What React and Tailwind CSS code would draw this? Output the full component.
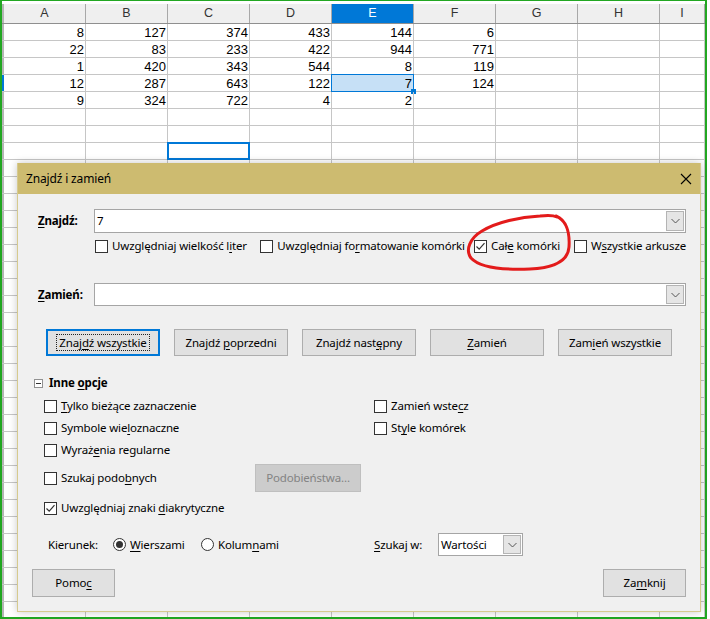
import React from 'react';

const cols = ['A', 'B', 'C', 'D', 'E', 'F', 'G', 'H', 'I'];
const data = [
  ['8', '127', '374', '433', '144', '6'],
  ['22', '83', '233', '422', '944', '771'],
  ['1', '420', '343', '544', '8', '119'],
  ['12', '287', '643', '122', '7', '124'],
  ['9', '324', '722', '4', '2', ''],
];
const rowCount = 36;

// label with one underlined (mnemonic) letter
function U({ t, i }) {
  if (i === undefined || i < 0) return <>{t}</>;
  return (
    <>
      {t.slice(0, i)}
      <span className="underline underline-offset-2">{t[i]}</span>
      {t.slice(i + 1)}
    </>
  );
}

function Check({ checked }) {
  return (
    <span className="w-[13px] h-[13px] shrink-0 bg-white border border-[#333] flex items-center justify-center">
      {checked && (
        <svg width="11" height="11" viewBox="0 0 11 11">
          <path d="M1.5 5.5 L4.2 8.2 L9.5 2.2" fill="none" stroke="#333" strokeWidth="1.2" />
        </svg>
      )}
    </span>
  );
}

function CheckItem({ t, u, checked, w }) {
  return (
    <div className={`flex items-center gap-[4px] ${w || ''}`}>
      <Check checked={checked} />
      <span className="whitespace-nowrap">
        <U t={t} i={u} />
      </span>
    </div>
  );
}

function Radio({ checked }) {
  return (
    <span className="w-[13px] h-[13px] shrink-0 rounded-full bg-white border border-[#333] flex items-center justify-center">
      {checked && <span className="w-[7px] h-[7px] rounded-full bg-[#333]" />}
    </span>
  );
}

function Chevron() {
  return (
    <svg width="9" height="6" viewBox="0 0 9 6">
      <path d="M0.5 1 L4.5 5 L8.5 1" fill="none" stroke="#555" strokeWidth="1" />
    </svg>
  );
}

function Btn({ t, u, w = 'w-[114px]', h = 'h-[27px]', focus, disabled }) {
  if (focus) {
    return (
      <div className={`${w} ${h} bg-[#e1e1e1] border-2 border-[#0078d7] flex items-center justify-center`}>
        <span className="border border-dotted border-[#222] px-[2px] leading-[15px]">
          <U t={t} i={u} />
        </span>
      </div>
    );
  }
  return (
    <div
      className={`${w} ${h} border flex items-center justify-center ${
        disabled ? 'bg-[#cccccc] border-[#bfbfbf] text-[#838383]' : 'bg-[#e1e1e1] border-[#adadad]'
      }`}
    >
      <span>
        <U t={t} i={u} />
      </span>
    </div>
  );
}

function Combo({ value, h = 'h-[24px]' }) {
  return (
    <div className={`flex-1 ${h} bg-white border border-[#a5a5a5] flex items-stretch`}>
      <div className="flex-1 pl-[2px] flex items-center">{value}</div>
      <div className="w-[18px] m-px bg-[#e5e5e5] border border-[#b4b4b4] flex items-center justify-center">
        <Chevron />
      </div>
    </div>
  );
}

function Sheet() {
  return (
    <div className="w-[707px] h-[619px] border-t border-l-2 border-r-2 border-b-2 border-[#22a722] overflow-hidden pt-[3px] font-['Liberation_Sans',sans-serif] text-[13px] text-black">
      <div className="flex h-[20px] bg-[#efefef] border-b border-[#8f8f8f]">
        <div className="w-[2px] bg-[#b5b5b5]" />
        {cols.map((c) => (
          <div
            key={c}
            className={`${c === 'I' ? 'flex-1' : 'w-[82px]'} border-r border-[#a8a8a8] flex items-center justify-center text-[12.5px] ${
              c === 'E' ? 'bg-[#0078d7] text-white' : 'text-[#333]'
            }`}
          >
            {c}
          </div>
        ))}
      </div>
      {Array.from({ length: rowCount }).map((_, r) => (
        <div key={r} className="flex h-[17px] border-b border-[#c6c6c6]">
          <div className={`w-[2px] ${r === 3 ? 'bg-[#0078d7]' : 'bg-[#b5b5b5]'}`} />
          {cols.map((c, ci) => {
            const v = data[r] ? data[r][ci] || '' : '';
            const isE4 = r === 3 && c === 'E';
            const isC8 = r === 7 && c === 'C';
            return (
              <div
                key={c}
                className={`relative ${c === 'I' ? 'flex-1' : 'w-[82px]'} border-r border-[#c6c6c6] flex items-center justify-end pr-[1px] leading-none ${
                  isE4 ? 'bg-[#c6e0f6]' : ''
                }`}
              >
                {v}
                {isE4 && (
                  <>
                    <div className="absolute -left-px -top-px w-[83px] h-[18px] border border-[#0078d7]" />
                    <div className="absolute -right-[3px] -bottom-[3px] w-[5px] h-[5px] bg-[#0078d7]" />
                  </>
                )}
                {isC8 && <div className="absolute -left-px -top-px w-[83px] h-[18px] border-2 border-[#0078d7]" />}
              </div>
            );
          })}
        </div>
      ))}
    </div>
  );
}

function Dialog() {
  return (
    <div className="absolute left-[17px] top-[163px] w-[684px] h-[449px] bg-[#f0f0f0] border-x border-b border-[#d6ca8e] shadow-[0_0_8px_rgba(0,0,0,0.22)] font-['Noto_Sans',sans-serif] text-[11.5px] tracking-[-0.15px] text-black flex flex-col">
      <div className="h-[31px] bg-[#cdbb70] flex items-center justify-between pl-[8px] pr-[8px] text-[12px]">
        <span>Znajdź i zamień</span>
        <svg width="12" height="12" viewBox="0 0 12 12">
          <path d="M1 1 L11 11 M11 1 L1 11" stroke="#000" strokeWidth="1.1" />
        </svg>
      </div>

      <div className="flex flex-col pr-[14px]">
        <div className="mt-[15px] h-[24px] flex items-center">
          <div className="w-[76px] pl-[20px] font-bold">
            <U t="Znajdź:" i={0} />
          </div>
          <Combo value="7" />
        </div>

        <div className="mt-[5px] h-[16px] flex items-center ml-[77px]">
          <CheckItem t="Uwzględniaj wielkość liter" u={22} w="w-[167px]" />
          <CheckItem t="Uwzględniaj formatowanie komórki" u={14} w="w-[216px]" />
          <CheckItem t="Całe komórki" u={3} checked w="w-[101px]" />
          <CheckItem t="Wszystkie arkusze" u={1} />
        </div>

        <div className="mt-[29px] h-[23px] flex items-center">
          <div className="w-[76px] pl-[20px] font-bold">
            <U t="Zamień:" i={0} />
          </div>
          <Combo value="" h="h-[23px]" />
        </div>

        <div className="mt-[23px] ml-[28px] flex gap-[14px]">
          <Btn t="Znajdź wszystkie" u={4} focus />
          <Btn t="Znajdź poprzedni" u={7} />
          <Btn t="Znajdź następny" u={11} />
          <Btn t="Zamień" u={0} />
          <Btn t="Zamień wszystkie" u={3} />
        </div>

        <div className="mt-[19px] h-[16px] ml-[16px] flex items-center gap-[6px]">
          <span className="w-[9px] h-[9px] border border-[#919191] bg-white flex items-center justify-center">
            <span className="w-[5px] h-px bg-[#333]" />
          </span>
          <span className="font-bold">
            <U t="Inne opcje" i={5} />
          </span>
        </div>

        <div className="mt-[4px] ml-[26px] flex flex-col">
          <div className="h-[22px] flex items-center">
            <CheckItem t="Tylko bieżące zaznaczenie" u={0} w="w-[330px]" />
            <CheckItem t="Zamień wstecz" u={11} />
          </div>
          <div className="h-[22px] flex items-center">
            <CheckItem t="Symbole wieloznaczne" u={11} w="w-[330px]" />
            <CheckItem t="Style komórek" u={2} />
          </div>
          <div className="h-[22px] flex items-center">
            <CheckItem t="Wyrażenia regularne" u={5} w="w-[330px]" />
          </div>
          <div className="mt-[3px] h-[28px] flex items-center">
            <CheckItem t="Szukaj podobnych" u={11} w="w-[211px]" />
            <Btn t="Podobieństwa..." w="w-[106px]" h="h-[28px]" disabled />
          </div>
          <div className="mt-[5px] h-[22px] flex items-center">
            <CheckItem t="Uwzględniaj znaki diakrytyczne" u={18} checked />
          </div>
        </div>

        <div className="mt-[14px] h-[23px] ml-[30px] flex items-center">
          <span className="w-[65px]">Kierunek:</span>
          <div className="w-[88px] flex items-center gap-[4px]">
            <Radio checked />
            <span>
              <U t="Wierszami" i={0} />
            </span>
          </div>
          <div className="w-[173px] flex items-center gap-[4px]">
            <Radio />
            <span>
              <U t="Kolumnami" i={5} />
            </span>
          </div>
          <span className="w-[64px]">
            <U t="Szukaj w:" i={0} />
          </span>
          <div className="w-[85px] flex">
            <Combo value="Wartości" h="h-[23px]" />
          </div>
        </div>

        <div className="mt-[13px] ml-[14px] flex justify-between">
          <Btn t="Pomoc" u={4} w="w-[83px]" h="h-[28px]" />
          <Btn t="Zamknij" u={2} w="w-[83px]" h="h-[28px]" />
        </div>
      </div>
    </div>
  );
}

export default function App() {
  return (
    <div className="relative w-[710px] h-[619px] overflow-hidden bg-white">
      <Sheet />
      <Dialog />
      <svg className="absolute left-0 top-0 pointer-events-none" width="710" height="619">
        <path
          d="M556 216 C566 220 570 232 569 247 C568 262 552 268 530 269 C505 270 480 268 471 258 C465 250 470 238 482 231 C497 222 520 217 540 216 C548 215 553 215 557 217"
          fill="none"
          stroke="#e31b1b"
          strokeWidth="3"
          strokeLinecap="round"
        />
      </svg>
    </div>
  );
}
